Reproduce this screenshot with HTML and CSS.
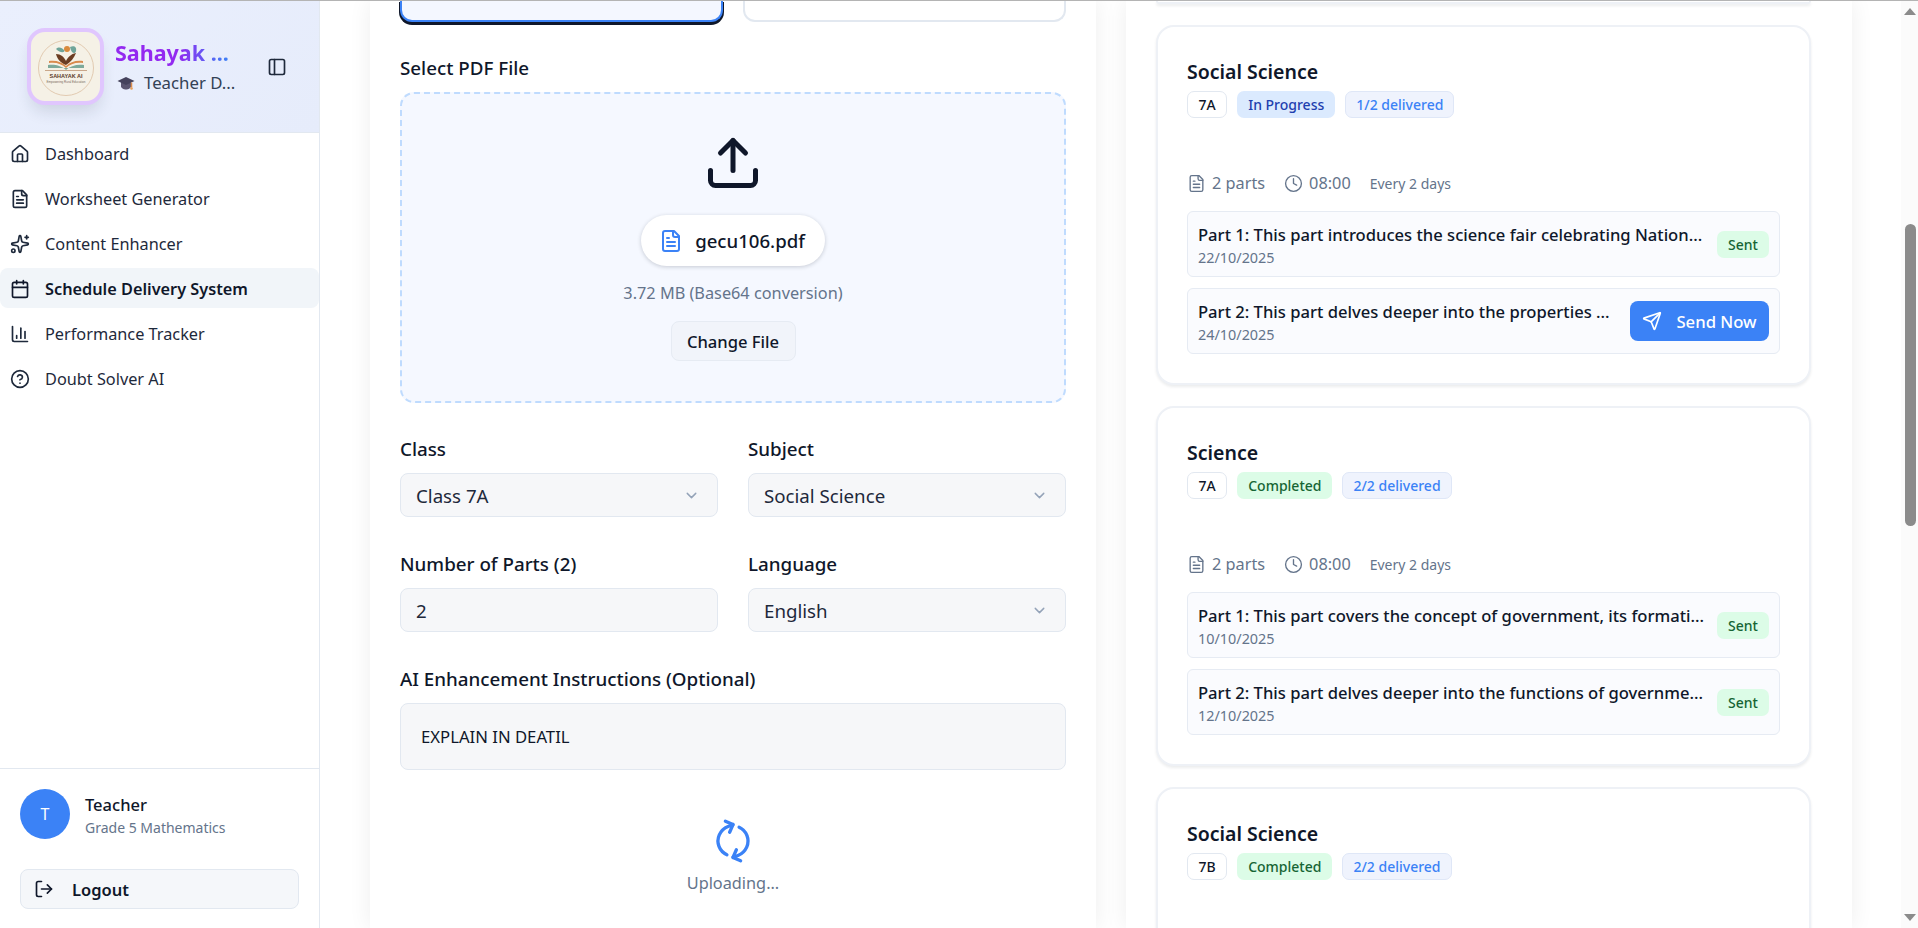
FILE: index.html
```html
<!DOCTYPE html>
<html lang="en">
<head>
<meta charset="utf-8">
<title>Schedule Delivery System</title>
<link rel="stylesheet" href="styles.css">
</head>
<body>
<div class="app">
  <aside class="sidebar">
    <header class="brand">
      <div class="logo">
        <svg viewBox="0 0 68 68" width="68" height="68">
          <circle cx="34" cy="35" r="27.5" fill="none" stroke="#d9b99a" stroke-width="0.7"/>
          <circle cx="35" cy="16" r="3" fill="#d98a3d"/>
          <path d="M24 16c3-3 6-1 8 1s-3 4-8-1zM38 14c4-2 7 0 6 4s-5 2-6-4z" fill="#6fa59a"/>
          <path d="M24 21c5 0 8 3 10 7 2-4 5-7 10-8-2 5-5 9-10 12-5-2-9-6-10-11z" fill="#6b3d22"/>
          <path d="M17 28c7-1 13 1 17 5 4-4 10-6 17-5v2c-7-1-13 1-17 5-4-4-10-6-17-5z" fill="#d98a4d"/>
          <path d="M16 32c7-1 14 1 18 5 4-4 11-6 18-5v3H16z" fill="#7ea99a"/>
          <rect x="13" y="37" width="42" height="1" fill="#c9a78a"/>
          <text x="34" y="45" class="logo-text">SAHAYAK AI</text>
          <text x="34" y="50" class="logo-sub">Empowering Rural Education</text>
        </svg>
      </div>
      <div class="brand-text">
        <div class="brand-title">Sahayak ...</div>
        <div class="brand-sub">
          <svg class="cap" viewBox="0 0 18 18" width="18" height="18">
            <path d="M4 8v4.500c0 1.500 2.500 3 5 3s5-1.500 5-3V8z" fill="#5a5570"/>
            <path d="M0.500 7 9 3l8.500 4L9 11z" fill="#45425c"/>
            <path d="M14.500 8.500v5" stroke="#d98a4d" stroke-width="1.500" fill="none"/>
            <circle cx="14.500" cy="14.500" r="1.300" fill="#e8a05a"/>
          </svg>
          <span>Teacher D...</span>
        </div>
      </div>
      <svg class="icon panel-icon" viewBox="0 0 24 24"><rect x="3" y="3" width="18" height="18" rx="2"/><path d="M9 3v18"/></svg>
    </header>
    <nav class="nav">
      <a class="nav-item"><svg class="icon" viewBox="0 0 24 24"><path d="M15 21v-8a1 1 0 0 0-1-1h-4a1 1 0 0 0-1 1v8"/><path d="M3 10a2 2 0 0 1 .709-1.528l7-5.999a2 2 0 0 1 2.582 0l7 5.999A2 2 0 0 1 21 10v9a2 2 0 0 1-2 2H5a2 2 0 0 1-2-2z"/></svg>Dashboard</a>
      <a class="nav-item"><svg class="icon" viewBox="0 0 24 24"><path d="M15 2H6a2 2 0 0 0-2 2v16a2 2 0 0 0 2 2h12a2 2 0 0 0 2-2V7Z"/><path d="M14 2v4a2 2 0 0 0 2 2h4"/><path d="M10 9H8"/><path d="M16 13H8"/><path d="M16 17H8"/></svg>Worksheet Generator</a>
      <a class="nav-item"><svg class="icon" viewBox="0 0 24 24"><path d="M11.017 2.814a1 1 0 0 1 1.966 0l1.051 5.558a2 2 0 0 0 1.594 1.594l5.558 1.051a1 1 0 0 1 0 1.966l-5.558 1.051a2 2 0 0 0-1.594 1.594l-1.051 5.558a1 1 0 0 1-1.966 0l-1.051-5.558a2 2 0 0 0-1.594-1.594l-5.558-1.051a1 1 0 0 1 0-1.966l5.558-1.051a2 2 0 0 0 1.594-1.594z"/><path d="M20 2v4"/><path d="M22 4h-4"/><circle cx="4" cy="20" r="2"/></svg>Content Enhancer</a>
      <a class="nav-item active"><svg class="icon" viewBox="0 0 24 24"><path d="M8 2v4"/><path d="M16 2v4"/><rect width="18" height="18" x="3" y="4" rx="2"/><path d="M3 10h18"/></svg>Schedule Delivery System</a>
      <a class="nav-item"><svg class="icon" viewBox="0 0 24 24"><path d="M3 3v16a2 2 0 0 0 2 2h16"/><path d="M18 17V9"/><path d="M13 17V5"/><path d="M8 17v-3"/></svg>Performance Tracker</a>
      <a class="nav-item"><svg class="icon" viewBox="0 0 24 24"><circle cx="12" cy="12" r="10"/><path d="M9.090 9a3 3 0 0 1 5.830 1c0 2-3 3-3 3"/><path d="M12 17h.01"/></svg>Doubt Solver AI</a>
    </nav>
    <footer class="side-foot">
      <div class="user">
        <div class="avatar">T</div>
        <div class="user-text">
          <div class="user-name">Teacher</div>
          <div class="user-role">Grade 5 Mathematics</div>
        </div>
      </div>
      <button class="logout"><svg class="icon" viewBox="0 0 24 24"><path d="M9 21H5a2 2 0 0 1-2-2V5a2 2 0 0 1 2-2h4"/><path d="m16 17 5-5-5-5"/><path d="M21 12H9"/></svg>Logout</button>
    </footer>
  </aside>

  <main class="content">
    <section class="panel">
      <div class="tabs">
        <div class="tab tab-on"></div>
        <div class="tab"></div>
      </div>
      <label class="label label-first">Select PDF File</label>
      <div class="drop">
        <svg class="upload" viewBox="0 0 24 24"><path d="M12 3v12"/><path d="m17 8-5-5-5 5"/><path d="M21 15v4a2 2 0 0 1-2 2H5a2 2 0 0 1-2-2v-4"/></svg>
        <div class="file-pill">
          <svg class="icon file-icon" viewBox="0 0 24 24"><path d="M15 2H6a2 2 0 0 0-2 2v16a2 2 0 0 0 2 2h12a2 2 0 0 0 2-2V7Z"/><path d="M14 2v4a2 2 0 0 0 2 2h4"/><path d="M10 9H8"/><path d="M16 13H8"/><path d="M16 17H8"/></svg>
          <span>gecu106.pdf</span>
        </div>
        <div class="file-size">3.72 MB (Base64 conversion)</div>
        <button class="change">Change File</button>
      </div>
      <div class="fields">
        <div class="field">
          <label class="label">Class</label>
          <div class="control">Class 7A<svg class="chev" viewBox="0 0 24 24"><path d="m6 9 6 6 6-6"/></svg></div>
        </div>
        <div class="field">
          <label class="label">Subject</label>
          <div class="control">Social Science<svg class="chev" viewBox="0 0 24 24"><path d="m6 9 6 6 6-6"/></svg></div>
        </div>
        <div class="field">
          <label class="label">Number of Parts (2)</label>
          <div class="control">2</div>
        </div>
        <div class="field">
          <label class="label">Language</label>
          <div class="control">English<svg class="chev" viewBox="0 0 24 24"><path d="m6 9 6 6 6-6"/></svg></div>
        </div>
      </div>
      <label class="label label-ai">AI Enhancement Instructions (Optional)</label>
      <div class="textarea">EXPLAIN IN DEATIL</div>
      <div class="loading">
        <svg class="spin" viewBox="0 0 24 24"><path d="M3 12a9 9 0 0 1 9-9 9.750 9.750 0 0 1 6.740 2.740L21 8"/><path d="M21 3v5h-5"/><path d="M21 12a9 9 0 0 1-9 9 9.750 9.750 0 0 1-6.740-2.740L3 16"/><path d="M8 16H3v5"/></svg>
        <div class="loading-text">Uploading...</div>
      </div>
    </section>

    <section class="panel panel-right">
      <div class="card card-sliver"></div>

      <article class="card">
        <h3 class="card-title">Social Science</h3>
        <div class="badges">
          <span class="badge b-class">7A</span>
          <span class="badge b-prog">In Progress</span>
          <span class="badge b-count">1/2 delivered</span>
        </div>
        <div class="meta">
          <svg class="icon" viewBox="0 0 24 24"><path d="M15 2H6a2 2 0 0 0-2 2v16a2 2 0 0 0 2 2h12a2 2 0 0 0 2-2V7Z"/><path d="M14 2v4a2 2 0 0 0 2 2h4"/><path d="M10 9H8"/><path d="M16 13H8"/><path d="M16 17H8"/></svg><span class="meta-a">2 parts</span>
          <svg class="icon" viewBox="0 0 24 24"><circle cx="12" cy="12" r="10"/><path d="M12 6v6l4 2"/></svg><span class="meta-a">08:00</span>
          <span class="meta-b">Every 2 days</span>
        </div>
        <div class="part">
          <div class="part-body"><div class="part-title">Part 1: This part introduces the science fair celebrating Nation...</div><div class="part-date">22/10/2025</div></div>
          <span class="sent">Sent</span>
        </div>
        <div class="part">
          <div class="part-body"><div class="part-title">Part 2: This part delves deeper into the properties ...</div><div class="part-date">24/10/2025</div></div>
          <button class="send"><svg class="icon" viewBox="0 0 24 24"><path d="M14.536 21.686a.5.5 0 0 0 .937-.024l6.500-19a.496.496 0 0 0-.635-.635l-19 6.500a.5.5 0 0 0-.024.937l7.930 3.180a2 2 0 0 1 1.112 1.110z"/><path d="m21.854 2.147-10.940 10.939"/></svg>Send Now</button>
        </div>
      </article>

      <article class="card">
        <h3 class="card-title">Science</h3>
        <div class="badges">
          <span class="badge b-class">7A</span>
          <span class="badge b-done">Completed</span>
          <span class="badge b-count">2/2 delivered</span>
        </div>
        <div class="meta">
          <svg class="icon" viewBox="0 0 24 24"><path d="M15 2H6a2 2 0 0 0-2 2v16a2 2 0 0 0 2 2h12a2 2 0 0 0 2-2V7Z"/><path d="M14 2v4a2 2 0 0 0 2 2h4"/><path d="M10 9H8"/><path d="M16 13H8"/><path d="M16 17H8"/></svg><span class="meta-a">2 parts</span>
          <svg class="icon" viewBox="0 0 24 24"><circle cx="12" cy="12" r="10"/><path d="M12 6v6l4 2"/></svg><span class="meta-a">08:00</span>
          <span class="meta-b">Every 2 days</span>
        </div>
        <div class="part">
          <div class="part-body"><div class="part-title">Part 1: This part covers the concept of government, its formati...</div><div class="part-date">10/10/2025</div></div>
          <span class="sent">Sent</span>
        </div>
        <div class="part">
          <div class="part-body"><div class="part-title">Part 2: This part delves deeper into the functions of governme...</div><div class="part-date">12/10/2025</div></div>
          <span class="sent">Sent</span>
        </div>
      </article>

      <article class="card">
        <h3 class="card-title">Social Science</h3>
        <div class="badges">
          <span class="badge b-class">7B</span>
          <span class="badge b-done">Completed</span>
          <span class="badge b-count">2/2 delivered</span>
        </div>
      </article>
    </section>
  </main>

  <div class="scrollbar">
    <svg class="arrow" viewBox="0 0 14 8"><path d="M7 0 14 8H0z"/></svg>
    <div class="track"><div class="thumb"></div></div>
    <svg class="arrow" viewBox="0 0 14 8"><path d="M0 0h14L7 8z"/></svg>
  </div>
</div>
</body>
</html>
```

FILE: styles.css
```css
* { box-sizing: border-box; }
html, body { margin: 0; height: 100%; overflow: hidden; }
body {
  font-family: "Noto Sans", "Open Sans", sans-serif;
  color: #0f172a;
  background: #fff;
  border-top: 1px solid #b4b4b4;
}
.app { display: flex; height: 927px; }

.icon {
  width: 20px; height: 20px; flex: none;
  fill: none; stroke: currentColor; stroke-width: 2;
  stroke-linecap: round; stroke-linejoin: round;
}

/* sidebar */
.sidebar {
  width: 320px; flex: none; display: flex; flex-direction: column;
  border-right: 1px solid #e2e8f0; background: #fff;
}
.brand {
  height: 132px; display: flex; align-items: center;
  padding: 0 32px 0 27px;
  background: linear-gradient(135deg, #eaeffd, #e6ecfb);
  border-bottom: 1px solid #e2e8f0;
}
.logo {
  width: 77px; height: 77px; flex: none; border-radius: 18px;
  background: #f5f1e6; border: 4px solid #e0c6fe;
  box-shadow: 0 10px 16px -4px rgba(30, 41, 59, .14);
  display: flex; align-items: center; justify-content: center;
}
.logo-text { font: 700 5.500px "Liberation Sans", sans-serif; fill: #5a3a28; text-anchor: middle; }
.logo-sub { font: 400 3px "Liberation Sans", sans-serif; fill: #7a6a5a; text-anchor: middle; }
.brand-text { flex: 1; margin-left: 11px; min-width: 0; }
.brand-title {
  font-size: 21.500px; font-weight: 700; line-height: 28px; margin-top: 1px;
  background: linear-gradient(90deg, #9329f0 55%, #3b82f6);
  -webkit-background-clip: text; background-clip: text; color: transparent;
  width: max-content;
}
.brand-sub { display: flex; align-items: center; gap: 9px; font-size: 16.800px; line-height: 24px; color: #334155; margin-top: 4px; margin-left: 2px; white-space: nowrap; }
.cap { flex: none; }
.panel-icon { color: #1e293b; }

.nav { flex: 1; display: flex; flex-direction: column; gap: 5px; }
.nav-item {
  height: 40px; display: flex; align-items: center; gap: 15px;
  padding: 1px 0 0 10px; font-size: 16.300px; color: #1e293b; border-radius: 8px;
}
.active { background: #f1f5f9; font-weight: 600; color: #0f172a; }

.side-foot { border-top: 1px solid #e2e8f0; padding: 20px 20px 19px; }
.user { display: flex; align-items: center; gap: 15px; }
.user-text { padding-top: 2px; }
.avatar {
  width: 50px; height: 50px; border-radius: 50%; background: #3b82f6;
  color: #fff; display: flex; align-items: center; justify-content: center; font-size: 16px;
}
.user-name { font-size: 16.500px; font-weight: 500; line-height: 24px; }
.user-role { font-size: 14px; line-height: 21px; color: #64748b; }
.logout {
  margin-top: 30px; width: 100%; height: 40px; display: flex; align-items: center; gap: 18px;
  padding: 0 13px; background: #f5f7fa; border: 1px solid #e2e8f0; border-radius: 8px;
  font: 600 16.500px "Noto Sans", sans-serif; color: #0f172a;
}

/* main */
.content {
  flex: 1; min-width: 0; display: grid; grid-template-columns: 726px 726px; gap: 30px;
  padding: 0 49px 0 50px; background: #fff; overflow: hidden;
}
.panel {
  background: #fff; padding: 0 30px; height: 927px; overflow: hidden;
  box-shadow: 0 0 22px rgba(0, 0, 0, .07);
}
.panel-right { padding: 0 41px 0 30px; display: flex; flex-direction: column; gap: 21px; }
.tabs { display: grid; grid-template-columns: 1fr 1fr; gap: 20px; }
.tab {
  height: 21px; border: 2px solid #e2e8f0; border-top: 0; border-radius: 0 0 12px 12px; background: #fff;
}
.tab-on { background: #f4f7ff; border-color: #3b82f6; box-shadow: 0 2px 0 1px #0f172a; }

.label { display: block; font-size: 18.800px; font-weight: 500; line-height: 24px; color: #0f172a; }
.label-first { margin-top: 34px; }
.drop {
  margin-top: 12px; height: 311px; border: 2px dashed #bfdbfe; border-radius: 14px; background: #f5f8ff;
  display: flex; flex-direction: column; align-items: center; padding-top: 39px;
}
.upload { width: 60px; height: 60px; flex: none; fill: none; stroke: #0f172a; stroke-width: 2; stroke-linecap: round; stroke-linejoin: round; }
.file-pill {
  margin-top: 22px; height: 51px; padding: 0 20px 0 18px; display: flex; align-items: center; gap: 12px;
  background: #fff; border-radius: 26px; font-size: 18.600px; font-weight: 500; box-shadow: 0 1px 4px rgba(15, 23, 42, .2);
}
.file-icon { color: #3b82f6; width: 24px; height: 24px; }
.file-size { margin-top: 16px; font-size: 16.300px; line-height: 22px; color: #64748b; }
.change {
  margin-top: 17px; width: 125px; height: 40px; background: #f1f4fa; border: 1px solid #e6ebf3; border-radius: 8px;
  font: 500 16.600px "Noto Sans", sans-serif; color: #0f172a;
}
.fields { margin-top: 34px; display: grid; grid-template-columns: 1fr 1fr; column-gap: 30px; row-gap: 35px; }
.field .label { margin-bottom: 12px; }
.control {
  height: 44px; padding: 1px 15px 0; display: flex; align-items: center; justify-content: space-between;
  background: #f6f7f9; border: 1px solid #e2e8f0; border-radius: 8px; font-size: 18.700px; color: #1e293b;
}
.chev { width: 17px; height: 17px; fill: none; stroke: #94a3b8; stroke-width: 2; stroke-linecap: round; stroke-linejoin: round; margin-right: 2px; }
.label-ai { margin-top: 35px; }
.textarea {
  margin-top: 12px; height: 67px; padding: 0 20px; display: flex; align-items: center;
  background: #f6f7f9; border: 1px solid #e2e8f0; border-radius: 8px; font-size: 16.700px; color: #0f172a;
}
.loading { margin-top: 51px; display: flex; flex-direction: column; align-items: center; }
.spin {
  width: 40px; height: 40px; fill: none; stroke: #3b82f6; stroke-width: 2; stroke-linecap: round; stroke-linejoin: round;
  transform: rotate(-66deg);
}
.loading-text { margin-top: 10px; font-size: 16.300px; line-height: 24px; color: #64748b; }

/* schedule cards */
.card {
  flex: none; background: #fff; border: 2px solid #eef1f6; border-radius: 18px;
  padding: 33px 29px 29px; height: 360px; box-shadow: 0 2px 3px rgba(15, 23, 42, .08);
}
.card-sliver { height: 3px; padding: 0; border-top: 0; border-radius: 0 0 14px 14px; }
.card-title { margin: 0; font-size: 19.500px; font-weight: 600; line-height: 24px; color: #0f172a; }
.badges { display: flex; gap: 10px; margin-top: 7px; }
.badge {
  height: 27px; padding: 0 10px; display: flex; align-items: center; border-radius: 7px;
  font-size: 14px; font-weight: 500; border: 1px solid transparent;
}
.b-class { background: #fff; border-color: #e2e8f0; color: #0f172a; padding: 0 10.500px; }
.b-prog { background: #dbeafe; color: #1e40af; }
.b-done { background: #dcfce7; color: #166534; }
.b-count { background: #eff3fd; border-color: #dfe7f7; color: #3b82f6; }
.meta { margin-top: 53px; height: 24px; display: flex; align-items: center; color: #64748b; font-size: 16.300px; }
.meta .icon { width: 19px; height: 19px; stroke-width: 1.700; }
.meta-a { margin: 0 19px 0 6px; }
.meta-b { font-size: 14px; }
.part {
  margin-top: 11px; height: 66px; padding: 0 10px; display: flex; align-items: center; justify-content: space-between;
  background: #fafbfe; border: 1px solid #e6ebf3; border-radius: 6px;
}
.meta + .part { margin-top: 16px; }
.part-body { padding-top: 2px; }
.part-title { font-size: 16.600px; font-weight: 500; line-height: 24px; color: #0f172a; white-space: nowrap; }
.part-date { font-size: 14.400px; line-height: 20px; color: #64748b; margin-top: 1px; }
.sent {
  height: 27px; padding: 0 11px; display: flex; align-items: center; background: #dcfce7; color: #166534;
  border-radius: 7px; font-size: 14px; font-weight: 500;
}
.send {
  width: 139px; height: 40px; display: flex; align-items: center; justify-content: center; gap: 14px;
  background: #3b82f6; border: 0; border-radius: 8px; color: #fff;
  font: 500 16.700px "Noto Sans", sans-serif;
}

/* faux page scrollbar */
.scrollbar { width: 17px; flex: none; background: #fbfbfb; display: flex; flex-direction: column; align-items: center; padding: 6px 0; }
.arrow { width: 12px; height: 9px; fill: #8b8b8b; flex: none; }
.track { flex: 1; width: 100%; padding: 208px 2px 0 4px; }
.thumb { height: 302px; background: #8b8b8b; border-radius: 6px; }
```
